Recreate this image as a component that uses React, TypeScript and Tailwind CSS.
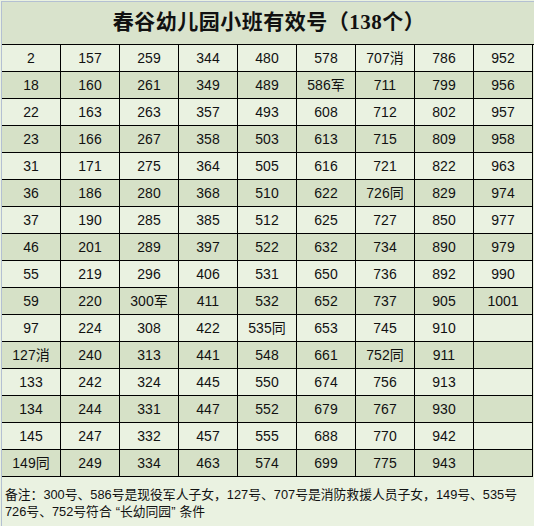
const cols: string[][] = [
  ["2", "18", "22", "23", "31", "36", "37", "46", "55", "59", "97", "127消", "133", "134", "145", "149同"],
  ["157", "160", "163", "166", "171", "186", "190", "201", "219", "220", "224", "240", "242", "244", "247", "249"],
  ["259", "261", "263", "267", "275", "280", "285", "289", "296", "300军", "308", "313", "324", "331", "332", "334"],
  ["344", "349", "357", "358", "364", "368", "385", "397", "406", "411", "422", "441", "445", "447", "457", "463"],
  ["480", "489", "493", "503", "505", "510", "512", "522", "531", "532", "535同", "548", "550", "552", "555", "574"],
  ["578", "586军", "608", "613", "616", "622", "625", "632", "650", "652", "653", "661", "674", "679", "688", "699"],
  ["707消", "711", "712", "715", "721", "726同", "727", "734", "736", "737", "745", "752同", "756", "767", "770", "775"],
  ["786", "799", "802", "809", "822", "829", "850", "890", "892", "905", "910", "911", "913", "930", "942", "943"],
  ["952", "956", "957", "958", "963", "974", "977", "979", "990", "1001", "", "", "", "", "", ""],
];

const rows = Array.from({ length: 16 }, (_, r) => cols.map((c) => c[r]));

export default function App() {
  return (
    <div
      className="w-[534px] h-[526px] overflow-hidden bg-[#eaf2e1] pl-[1px] pt-[1px] text-[#111]"
      style={{ fontFamily: '"Liberation Sans", "Noto Sans CJK SC", sans-serif' }}
    >
      <div className="h-full border-l border-t border-[#b4c0d2]">
        {/* title */}
        <div className="h-[42px] bg-[#d9e3cc] flex items-center justify-center">
          <h1
            className="text-[21px] font-bold tracking-[0.5px] pl-[2px]"
            style={{ fontFamily: '"Liberation Serif", "Noto Sans CJK SC", serif' }}
          >
            春谷幼儿园小班有效号（138个）
          </h1>
        </div>

        {/* table */}
        <div className="grid grid-cols-[repeat(9,59px)] border-t border-black">
          {rows.map((row, r) =>
            row.map((v, c) => (
              <div
                key={`${r}-${c}`}
                className={`h-[27px] flex items-center justify-center border-b border-r border-black text-[14px] ${
                  r % 2 === 0 ? "bg-[#eaf2e1]" : "bg-[#d6e1c7]"
                }`}
              >
                {v}
              </div>
            ))
          )}
        </div>

        {/* note */}
        <div className="pl-[3px] pt-[9px] text-[12.8px] leading-[17px] whitespace-nowrap">
          <div>备注：300号、586号是现役军人子女，127号、707号是消防救援人员子女，149号、535号</div>
          <div>
            726号、752号符合<span className="ml-[4px]">“</span>长幼同园<span className="mr-[4px]">”</span>条件
          </div>
        </div>
      </div>
    </div>
  );
}
